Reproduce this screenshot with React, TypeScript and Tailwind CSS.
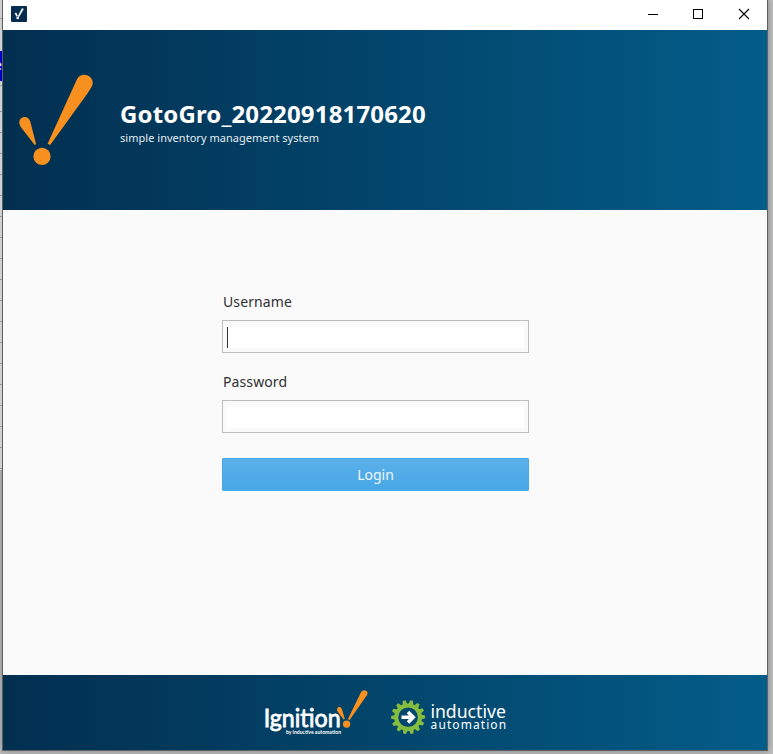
import React from 'react';

const rowLines = [18, 85, 111, 132, 153, 174, 195, 216, 237, 258, 279, 300, 321, 342, 363, 384, 405, 426, 447, 468];

const teeth = Array.from({ length: 14 }, (_, i) => (i * 360) / 14);

function AppIcon() {
  return (
    <svg className="h-4 w-4" viewBox="0 0 16 16">
      <rect width="16" height="16" rx="1" fill="#062b50" />
      <path d="M10.9 2.4 12.6 2.9 8.1 10.8 6.9 10.3ZM3.8 7.3 5.3 6.8 6.6 10 5.5 10.5Z" fill="#fff" stroke="#fff" strokeWidth=".3" />
      <circle cx="6.7" cy="12" r="1.3" fill="#fff" />
    </svg>
  );
}

function IgnitionMark({ className }: { className: string }) {
  return (
    <svg className={className} viewBox="19 74 74 92" fill="#f7901e">
      <path d="M77.2 78.8C79.3 75.2 83.4 73.9 87.2 75.3C92 77.1 94.1 82 91.8 86.6C90.8 88.7 89.2 90.7 87.8 92.9L50.2 145.1L47.6 143.8Z" />
      <path d="M19.3 123.3C18.9 120 21 117.5 23.8 117C26.8 116.5 29.2 118.3 30.2 121.3L36.1 144.2L34.7 145L20.6 126.8Z" />
      <circle cx="42" cy="156.4" r="8.6" />
    </svg>
  );
}

function IgnitionLogo() {
  return (
    <svg className="h-[50px] w-[106px]" viewBox="264 688 106 50">
      <text x="263.7" y="727" textLength="77" lengthAdjust="spacingAndGlyphs" fill="#fff" stroke="#fff" strokeWidth=".8" className="font-['Lato'] text-[25px]">Ignition</text>
      <text x="286" y="734" textLength="55" lengthAdjust="spacingAndGlyphs" fill="#fff" className="font-['Lato'] text-[6px] font-bold">by inductive automation</text>
      <g fill="#f7901e">
        <path d="M361 692.2C362.3 690.3 364.5 689.7 366.2 690.8C367.7 691.8 367.9 693.5 366.9 695.2L349.6 720L347.8 719.2Z" />
        <path d="M337.1 710.2C336.8 708.5 337.7 707.4 339.1 707.1C340.5 706.9 341.3 707.7 341.8 709.1L344.8 718.8L343.7 719.5L337.9 712.1Z" />
        <circle cx="346.6" cy="724.1" r="3.7" />
      </g>
    </svg>
  );
}

function InductiveLogo() {
  return (
    <svg className="h-[38px] w-[118px] overflow-visible" viewBox="390 698 118 38">
      <g fill="#85bd3f">
        {teeth.map((angle) => (
          <path key={angle} d="M405.7 704.2 406.7 700.2H409.5L410.5 704.2Z" transform={`rotate(${angle + 12} 408.1 717.2)`} />
        ))}
      </g>
      <circle cx="408.1" cy="717.2" r="11.8" fill="none" stroke="#85bd3f" strokeWidth="4" />
      <path d="M401.5 717.2H413M408 712 413.2 717.2 408 722.4" fill="none" stroke="#fff" strokeWidth="3.6" />
      <text x="430.4" y="718" textLength="75.5" lengthAdjust="spacingAndGlyphs" fill="#fff" className="font-['Noto_Sans'] text-[18.5px]">inductive</text>
      <text x="430.6" y="729" textLength="75.5" fill="#fff" className="font-['Noto_Sans'] text-[12px]">automation</text>
    </svg>
  );
}

export default function App() {
  return (
    <div className="relative flex h-[754px] w-[773px] overflow-hidden bg-[#bdbdbd] pl-[2px] font-['Noto_Sans',sans-serif]">
      <div className="absolute left-0 top-0 h-[470px] w-[2px] bg-[#d0d0d0]">
        {rowLines.map((y) => (
          <div key={y} className="absolute left-0 h-px w-[2px] bg-[#999]" style={{ top: y }} />
        ))}
        <div className="absolute left-0 top-[51px] h-[30px] w-[2px] overflow-hidden bg-[#0000c8]">
          <span className="absolute -left-[6px] top-1 text-[14px] leading-5 text-white">e</span>
        </div>
      </div>

      <main className="flex h-[751px] w-[766px] flex-col border-x border-b border-[#5d6062] bg-[#fafafa] shadow-[0_0_7px_rgba(0,0,0,0.3)]">
        <div className="flex h-[30px] shrink-0 items-start justify-between bg-white pl-2 pr-[17px]">
          <div className="pt-[6px]"><AppIcon /></div>
          <svg className="h-[30px] w-[102px]" viewBox="648 0 102 30" fill="none" stroke="#000" shapeRendering="crispEdges">
            <path d="M648 14.5H658" />
            <rect x="693.5" y="9.5" width="9" height="9" />
            <path d="M739 9 749 19M749 9 739 19" shapeRendering="auto" strokeWidth="1.1" />
          </svg>
        </div>

        <header className="flex h-[180px] shrink-0 bg-linear-to-r from-[#022f50] to-[#035d89] pl-4 text-white">
          <IgnitionMark className="mt-[44px] h-[92px] w-[74px]" />
          <div className="ml-[27px] pt-[67px]">
            <h1 className="text-[24px] leading-[33px] font-bold tracking-[0.15px]">GotoGro_20220918170620</h1>
            <p className="text-[11px] leading-[15px] tracking-[0.03px] text-[#e5edf1]">simple inventory management system</p>
          </div>
        </header>

        <section className="flex flex-1 flex-col pl-[219px] pt-[82px] text-[14px] text-[#303030]">
          <label className="h-[28px] pl-px leading-[20px] tracking-[0.1px]">Username</label>
          <div className="h-[33px] w-[307px] border border-[#bdbdbd] px-1 py-[6px] pb-1">
            <div className="h-[21px] border-l border-[#333] bg-white" />
          </div>
          <label className="mt-[19px] h-[28px] pl-px leading-[20px] tracking-[0.1px]">Password</label>
          <div className="h-[33px] w-[307px] border border-[#bdbdbd] px-1 py-[6px] pb-1">
            <div className="h-[21px] bg-white" />
          </div>
          <button className="mt-[25px] h-[33px] w-[307px] rounded-[1px] border border-[#48a7e7] bg-linear-to-b from-[#5bb0e8] to-[#47a7e7] leading-[31px] text-[#eef7fd]">Login</button>
        </section>

        <footer className="flex h-[75px] shrink-0 bg-linear-to-r from-[#022f50] to-[#035d89] pl-[261px]">
          <div className="pt-[13px]"><IgnitionLogo /></div>
          <div className="ml-5 pt-[23px]"><InductiveLogo /></div>
        </footer>
      </main>
    </div>
  );
}
